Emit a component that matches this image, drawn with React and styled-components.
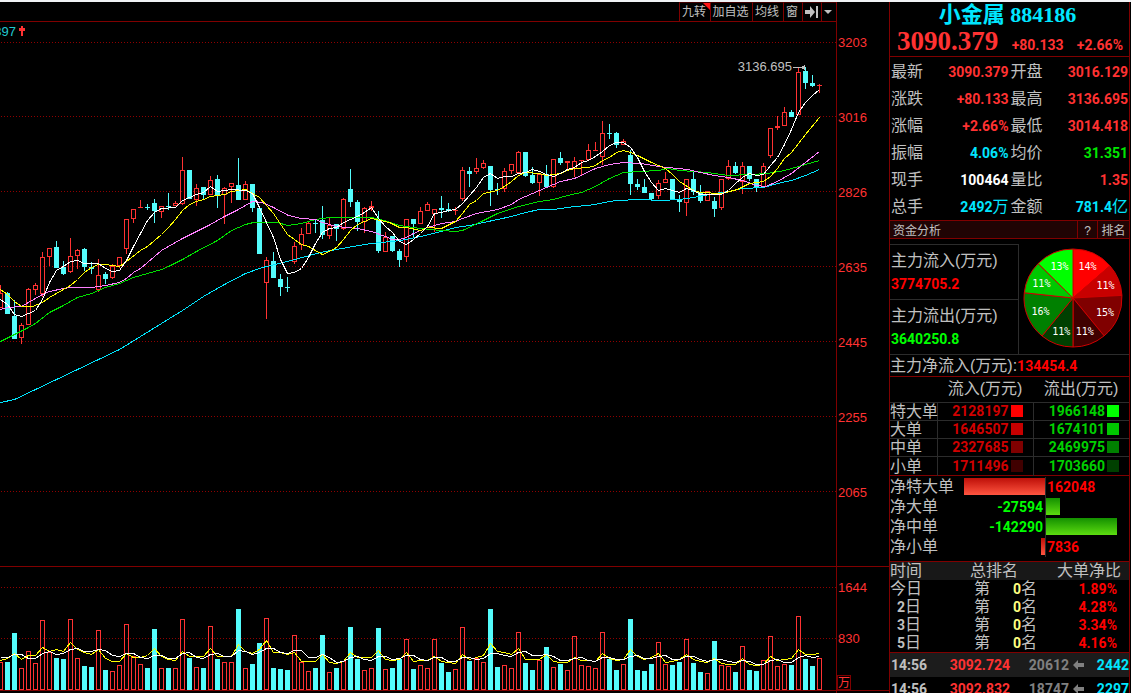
import React from 'react'
import styled, { createGlobalStyle } from 'styled-components'

const LINE = '#800000'
const RED = '#ff3232'
const CYAN = '#54fcfc'
const GREY = '#c0c0c0'
const AQUA = '#00e6ff'

const GlobalStyle = createGlobalStyle`
  * {
    box-sizing: border-box;
  }
  body {
    margin: 0;
    background: #000;
    color: ${GREY};
    font-family: 'Liberation Sans', 'Noto Sans CJK SC', sans-serif;
    font-size: 16px;
    font-weight: 400;
  }
  button {
    margin: 0;
    padding: 0;
    border: 0;
    background: none;
    color: inherit;
    font: inherit;
  }
  table {
    border-collapse: collapse;
    border-spacing: 0;
  }
  th,
  td {
    padding: 0;
    font-weight: 400;
    white-space: nowrap;
  }
`

const Page = styled.div`
  display: flex;
  flex-direction: column;
  height: 100vh;
  overflow: hidden;
  border-top: 2px solid #f0f2f5;
`
const Body = styled.div`
  display: flex;
  flex: 1;
  min-height: 0;
`
const Plots = styled.main`
  flex: 1;
  min-width: 0;
  border-right: 1px solid ${LINE};
`
const Toolbar = styled.div`
  display: flex;
  justify-content: flex-end;
  height: 20px;
  border-bottom: 1px solid ${LINE};
`
const ToolButton = styled.button`
  position: relative;
  display: flex;
  align-items: center;
  justify-content: center;
  width: ${(p) => p.$width}px;
  padding-right: 2px;
  border-top: 1px solid #400000;
  border-left: 1px solid ${LINE};
  font-size: 12px;
  line-height: 18px;
`
const Corner = styled.span`
  position: absolute;
  top: 0;
  right: 0;
  border-top: 7px solid #ff1414;
  border-left: 7px solid transparent;
`
const Plot = styled.div`
  display: flex;
  justify-content: flex-end;
  overflow: hidden;
  height: ${(p) => p.$height}px;
  border-bottom: 1px solid ${LINE};
  svg {
    flex: none;
    display: block;
  }
`
const Axis = styled.div`
  width: 52px;
`
const AxisPart = styled.div`
  display: flex;
  flex-direction: column;
  height: ${(p) => p.$height}px;
  padding-top: ${(p) => p.$top}px;
  border-bottom: 1px solid ${LINE};
`
const AxisLabel = styled.span`
  height: ${(p) => p.$step}px;
  padding-left: 1px;
  color: ${RED};
  font-size: 13px;
  line-height: 16px;
`
const AxisUnit = styled.span`
  width: 14px;
  height: 15px;
  margin-top: auto;
  border: 1px solid ${LINE};
  color: ${RED};
  font-size: 12px;
  line-height: 14px;
`

const Panel = styled.aside`
  display: flex;
  flex-direction: column;
  width: 241px;
  margin-right: 1px;
  overflow: hidden;
  border-left: 1px solid ${LINE};
  border-right: 1px solid ${LINE};
`
const Num = styled.span`
  color: ${(p) => p.$color};
  font-family: Roboto, 'Noto Sans CJK SC', sans-serif;
  font-size: 14px;
  font-weight: 700;
`
const Unit = styled.span`
  font-size: 16px;
  font-weight: 400;
`
const Head = styled.header`
  height: 55px;
  border-bottom: 1px solid ${LINE};
  text-align: center;
`
const Title = styled.h1`
  margin: 0;
  padding-right: 4px;
  color: ${AQUA};
  font-family: 'Liberation Serif', 'Noto Sans CJK SC', serif;
  font-size: 22px;
  font-weight: 700;
  line-height: 25px;
`
const PriceLine = styled.div`
  display: flex;
  align-items: baseline;
  justify-content: space-between;
  padding: 0 6px 0 7px;
  line-height: 28px;
`
const LastPrice = styled.strong`
  color: ${RED};
  font-family: 'Liberation Serif', serif;
  font-size: 27px;
  font-weight: 700;
`
const Quotes = styled.dl`
  display: grid;
  grid-template-columns: 1fr 1fr;
  margin: 0;
  padding-bottom: 1px;
`
const Quote = styled.div`
  display: flex;
  justify-content: space-between;
  height: 27px;
  padding: 0 1px;
  line-height: 30px;
  dd {
    margin: 0;
    white-space: nowrap;
  }
`
const SectionBar = styled.div`
  display: flex;
  height: 19px;
  border-top: 1px solid ${LINE};
  border-bottom: 1px solid ${LINE};
  background: #200404;
  font-size: 12px;
  line-height: 20px;
`
const SectionName = styled.h2`
  flex: 1;
  margin: 0;
  padding-left: 3px;
  font-size: 12px;
  font-weight: 400;
`
const BarButton = styled.button`
  width: ${(p) => p.$width}px;
  border-left: 1px solid ${LINE};
`
const Fund = styled.section`
  display: flex;
  padding-top: 5px;
`
const FundBoxes = styled.div`
  width: 129px;
  border-right: 1px solid #2c2c2c;
`
const FundBox = styled.div`
  height: 55px;
  padding: 4px 0 0 1px;
  border-top: 1px solid #2c2c2c;
  line-height: 24px;
  white-space: nowrap;
`
const FundValue = styled(Num)`
  display: block;
  line-height: 22px;
`
const PieBox = styled.div`
  display: flex;
  flex: 1;
  align-items: center;
  justify-content: center;
  padding: 0 2px 2px 0;
`
const NetTotal = styled.div`
  height: 23px;
  border-top: 1px solid #2c2c2c;
  border-bottom: 1px solid ${LINE};
  line-height: 22px;
  white-space: nowrap;
`
const FlowTable = styled.table`
  width: 100%;
  table-layout: fixed;
  border-bottom: 1px solid ${LINE};
  thead th {
    height: 25px;
    line-height: 24px;
  }
  tbody th,
  tbody td {
    height: 18px;
    border-top: 1px solid #2c2c2c;
    line-height: 17px;
    text-align: left;
  }
  tbody td {
    border-left: 1px solid #2c2c2c;
  }
  tbody tr:last-child > * {
    height: 19px;
    padding-top: 1px;
  }
`
const FlowCell = styled.span`
  display: flex;
  align-items: center;
  justify-content: flex-end;
  gap: 2px;
  padding-right: 10px;
`
const Swatch = styled.i`
  width: 12px;
  height: 12px;
  background: ${(p) => p.$color};
`
const NetList = styled.section`
  padding: 1px 0 4px;
  border-bottom: 1px solid ${LINE};
`
const NetRow = styled.div`
  display: grid;
  grid-template-columns: 155px 1fr;
  height: 20px;
  line-height: 20px;
`
const NetLeft = styled.div`
  display: flex;
  align-items: center;
  justify-content: space-between;
`
const NetRight = styled.div`
  display: flex;
  align-items: center;
  gap: 2px;
  border-left: 1px solid #2c2c2c;
`
const NetNum = styled(Num)`
  padding: 0 2px 0 1px;
`
const NetBar = styled.span`
  height: 17px;
  background: ${(p) =>
    p.$up
      ? 'linear-gradient(#be0f08, #ff5540)'
      : 'linear-gradient(#149000, #5cdc10)'};
`
const RankTable = styled.table`
  width: 100%;
  table-layout: fixed;
  border-bottom: 1px solid ${LINE};
  thead {
    background: #181818;
  }
  th,
  td {
    height: 18px;
    line-height: 18px;
    text-align: left;
  }
  th:last-child {
    padding-left: 17px;
  }
  td:last-child {
    padding-right: 12px;
    text-align: right;
  }
`
const Day = styled.span`
  display: block;
  width: 31px;
  text-align: right;
`
const Place = styled.span`
  display: flex;
  justify-content: space-between;
  width: 63px;
  margin-left: 4px;
`
const TickTable = styled.table`
  width: 100%;
  table-layout: fixed;
  td {
    height: 24px;
    line-height: 24px;
    text-align: right;
  }
  td:first-child {
    padding-left: 1px;
    text-align: left;
  }
  tr:first-child {
    background: #1c1c1c;
  }
`
const TickVolume = styled.span`
  display: flex;
  align-items: center;
  justify-content: flex-end;
  gap: 4px;
`

// [up, body top, body bottom, high, low, volume top]
const candles = [
  [1, 293, 308, 285, 308, 662], [0, 293, 314, 292, 314, 662],
  [0, 316, 339, 300, 339, 633], [1, 325, 338, 323, 344, 668],
  [1, 289, 325, 288, 325, 651], [1, 285, 290, 283, 295, 663],
  [1, 257, 294, 252, 297, 620], [1, 248, 257, 248, 266, 652],
  [0, 247, 268, 241, 268, 658], [0, 267, 274, 261, 275, 659],
  [1, 256, 272, 238, 273, 619], [1, 250, 256, 249, 269, 658],
  [0, 249, 267, 248, 271, 666], [0, 267, 269, 262, 274, 667],
  [1, 275, 290, 259, 292, 630], [0, 274, 279, 272, 284, 670],
  [1, 266, 278, 264, 279, 671], [1, 257, 266, 257, 268, 665],
  [1, 219, 249, 219, 254, 624], [1, 209, 219, 209, 223, 656],
  [1, 207, 208, 200, 208, 664], [0, 207, 208, 204, 210, 668],
  [0, 203, 211, 199, 223, 629], [1, 206, 212, 206, 218, 668],
  [0, 206, 207, 193, 210, 668], [1, 203, 206, 201, 206, 668],
  [1, 170, 204, 157, 205, 619], [0, 170, 199, 170, 199, 658],
  [1, 188, 200, 184, 206, 667], [0, 187, 195, 187, 199, 668],
  [1, 180, 195, 176, 195, 626], [0, 179, 196, 175, 208, 659],
  [1, 188, 195, 187, 224, 662], [1, 183, 187, 183, 203, 662],
  [0, 185, 200, 158, 200, 609], [1, 184, 200, 181, 200, 668],
  [0, 184, 208, 184, 212, 664], [0, 208, 254, 208, 254, 643],
  [1, 260, 283, 257, 319, 618], [0, 261, 278, 252, 278, 668],
  [0, 279, 287, 274, 296, 669], [0, 287, 288, 277, 292, 670],
  [1, 246, 262, 242, 264, 635], [1, 234, 245, 228, 250, 662],
  [1, 223, 234, 222, 234, 671], [0, 223, 224, 220, 233, 668],
  [0, 220, 235, 206, 239, 635], [1, 225, 236, 218, 239, 672],
  [0, 224, 229, 224, 241, 668], [1, 199, 229, 198, 230, 661],
  [0, 189, 202, 169, 207, 627], [0, 202, 222, 200, 231, 659],
  [1, 208, 222, 207, 233, 670], [1, 206, 208, 201, 211, 668],
  [0, 219, 251, 211, 253, 628], [1, 237, 252, 232, 252, 669],
  [0, 236, 251, 236, 252, 668], [0, 251, 260, 249, 267, 659],
  [1, 219, 257, 219, 262, 639], [0, 219, 224, 219, 237, 669],
  [1, 211, 224, 207, 224, 665], [1, 204, 211, 202, 211, 668],
  [1, 209, 214, 209, 232, 639], [0, 208, 210, 196, 218, 663],
  [0, 209, 211, 203, 212, 672], [1, 210, 211, 207, 215, 669],
  [1, 170, 199, 167, 201, 627], [0, 171, 174, 167, 187, 661],
  [1, 168, 172, 158, 174, 658], [1, 163, 168, 160, 169, 662],
  [0, 166, 190, 166, 206, 609], [0, 189, 190, 183, 195, 667],
  [1, 171, 189, 168, 192, 665], [1, 164, 171, 164, 174, 668],
  [1, 152, 173, 151, 173, 632], [0, 152, 176, 152, 177, 663],
  [0, 175, 183, 167, 184, 670], [1, 174, 183, 174, 196, 660],
  [0, 174, 187, 165, 187, 647], [1, 159, 187, 159, 188, 667],
  [0, 158, 163, 152, 165, 664], [1, 161, 163, 161, 169, 670],
  [1, 161, 169, 157, 177, 636], [1, 160, 161, 160, 176, 665],
  [1, 150, 160, 144, 161, 666], [1, 150, 151, 142, 151, 668],
  [1, 133, 157, 121, 165, 632], [0, 133, 134, 124, 139, 659],
  [0, 133, 145, 132, 148, 670], [1, 141, 145, 139, 145, 664],
  [0, 155, 184, 150, 195, 619], [0, 184, 187, 179, 190, 670],
  [0, 187, 193, 179, 193, 671], [0, 193, 199, 193, 200, 664],
  [1, 183, 196, 180, 199, 642], [1, 179, 183, 172, 183, 664],
  [0, 179, 199, 179, 199, 665], [0, 199, 202, 195, 212, 662],
  [1, 179, 203, 179, 216, 639], [0, 179, 192, 172, 195, 663],
  [0, 192, 201, 185, 203, 672], [1, 191, 201, 191, 201, 673],
  [0, 201, 209, 197, 217, 641], [1, 179, 208, 179, 210, 665],
  [1, 166, 179, 160, 180, 666], [0, 166, 173, 162, 174, 672],
  [1, 166, 182, 162, 194, 646], [0, 166, 179, 166, 181, 670],
  [0, 179, 187, 179, 192, 671], [1, 166, 187, 163, 187, 660],
  [1, 128, 156, 128, 158, 636], [1, 126, 128, 116, 130, 666],
  [1, 112, 126, 107, 126, 664], [0, 112, 117, 110, 117, 665],
  [1, 72, 115, 68, 115, 616], [0, 71, 83, 67, 89, 659],
  [0, 83, 86, 75, 87, 666], [1, 85, 86, 84, 93, 658],
]

const averages = [
  {
    color: '#00e6ff',
    points:
      '0,402 14,399 35,389 56,379 77,369 98,359 119,349 140,336 161,323 182,310 203,296 224,284 245,273 262,267 287,261 320,252 347,247 371,243 400,240 420,236 437,232 455,227 469,225 483,222 511,216 525,212 539,209 553,209 574,206 588,205 615,200 640,199 660,200 679,199 693,197 714,193 728,191 742,188 763,187 777,183 791,180 805,175 819,169',
  },
  {
    color: '#00e000',
    points:
      '0,341 14,334 28,327 35,323 49,312 63,305 77,297 91,293 105,287 119,283 133,277 147,273 161,269 168,266 182,259 196,251 217,240 231,230 245,224 253,222 277,222 287,225 301,223 315,219 329,217 371,217 387,221 399,225 420,228 441,230 455,231 462,230 483,220 497,213 518,206 539,201 553,199 567,195 581,192 595,186 609,178 623,172 640,171 658,170 667,168 680,170 707,172 728,175 750,174 767,173 784,170 798,166 805,164 819,160',
  },
  {
    color: '#ff80ff',
    points:
      '0,309 7,307 21,306 28,302 42,294 49,291 63,288 70,287 91,287 105,285 119,282 126,278 133,272 140,268 161,250 182,238 196,231 210,224 224,216 238,209 252,201 262,202 273,207 288,215 301,218 315,219 322,222 336,226 357,228 371,231 385,236 392,239 399,239 406,237 413,233 427,227 441,223 455,221 462,218 476,213 497,209 511,204 518,199 539,190 560,181 574,178 595,168 609,164 623,162 640,163 658,166 687,169 700,172 714,175 728,177 742,180 756,185 765,186 777,181 791,173 805,162 819,151',
  },
  {
    color: '#ffff00',
    points:
      '0,289 7,294 14,301 21,306 32,306 42,302 49,297 56,293 70,285 77,279 84,272 91,267 98,264 105,264 119,266 126,261 140,250 147,246 161,234 168,227 175,219 182,210 189,204 196,201 203,199 210,196 224,194 231,191 245,189 252,193 259,197 266,205 273,213 287,234 301,244 308,246 322,254 329,251 336,247 343,239 350,230 357,224 371,218 389,222 399,227 406,227 420,230 427,227 441,228 455,221 462,213 469,204 476,200 483,193 497,190 504,186 511,181 518,175 525,172 539,173 546,175 560,173 567,170 574,168 588,167 595,165 602,160 609,157 616,152 623,150 630,152 637,155 651,162 665,168 672,174 679,181 693,190 700,192 721,193 737,189 749,183 763,181 770,176 777,168 784,158 791,152 798,143 805,134 819,117',
  },
  {
    color: '#ffffff',
    points:
      '0,299 7,304 14,314 21,316 28,313 35,310 42,299 49,282 56,270 63,266 70,261 77,260 84,263 98,263 105,268 112,271 119,270 126,260 133,246 140,233 147,220 154,212 161,208 175,207 182,200 189,197 196,194 203,192 210,186 217,191 231,189 245,190 252,193 259,207 266,222 273,237 280,259 287,273 294,272 301,268 308,257 315,243 322,232 329,228 336,227 343,222 350,219 357,216 364,212 371,207 378,218 385,226 392,232 399,241 406,244 413,239 420,233 427,226 434,213 441,212 448,210 455,209 462,203 469,195 476,187 483,177 490,173 497,178 504,176 511,176 518,173 525,172 532,169 539,171 546,174 553,176 560,173 567,169 574,167 581,162 588,160 595,156 602,151 609,145 616,142 623,142 630,147 637,157 644,171 651,182 658,190 665,188 672,190 679,192 686,188 693,190 700,194 721,194 728,190 735,183 742,177 749,173 756,175 763,174 770,165 777,157 784,144 791,129 798,112 805,102 812,95 819,89',
  },
]

// offsets from y = 640, one per candle
const volumeAverages = [
  {
    color: '#ffff00',
    values: [
      20, 18, 13, 19, 15, 15, 7, 11, 9, 11, 2, 9, 12, 14, 9, 18, 21, 21, 13, 17,
      17, 15, 8, 16, 19, 20, 11, 16, 16, 16, 8, 16, 16, 16, 4, 11, 13, 9, 0, 12,
      12, 14, 12, 21, 21, 21, 14, 22, 23, 21, 12, 17, 17, 17, 10, 19, 20, 19, 12,
      21, 20, 20, 16, 21, 22, 23, 14, 19, 17, 15, 3, 11, 12, 14, 8, 19, 19, 19,
      14, 21, 22, 22, 17, 20, 20, 21, 13, 18, 20, 19, 9, 16, 19, 17, 13, 22, 21,
      19, 14, 19, 21, 22, 18, 23, 24, 24, 18, 24, 25, 24, 16, 20, 19, 18, 9, 14,
      14, 13,
    ],
  },
  {
    color: '#ffffff',
    values: [
      17, 17, 14, 14, 18, 18, 13, 11, 14, 13, 9, 8, 11, 11, 9, 10, 15, 16, 13, 13,
      17, 18, 15, 15, 18, 18, 13, 12, 17, 18, 14, 13, 16, 16, 10, 11, 14, 12, 8,
      8, 12, 13, 10, 10, 17, 17, 14, 17, 22, 21, 17, 16, 19, 20, 16, 16, 19, 18,
      15, 15, 19, 20, 17, 17, 21, 21, 17, 17, 19, 18, 13, 13, 15, 16, 12, 11, 15,
      15, 14, 16, 20, 20, 18, 17, 20, 21, 17, 17, 19, 19, 16, 15, 18, 18, 16, 15,
      19, 19, 16, 16, 19, 21, 19, 19, 21, 22, 20, 21, 24, 24, 20, 19, 22, 22, 17,
      15, 17, 16,
    ],
  },
]

const prices = [3203, 3016, 2826, 2635, 2445, 2255, 2065]
const priceLines = [42, 116, 191, 266, 341, 416, 491]

const quotes = [
  ['最新', '3090.379', RED],
  ['开盘', '3016.129', RED],
  ['涨跌', '+80.133', RED],
  ['最高', '3136.695', RED],
  ['涨幅', '+2.66%', RED],
  ['最低', '3014.418', RED],
  ['振幅', '4.06%', AQUA],
  ['均价', '31.351', '#00e600'],
  ['现手', '100464', '#ffffff'],
  ['量比', '1.35', RED],
  ['总手', '2492', AQUA, '万'],
  ['金额', '781.4', AQUA, '亿'],
]

const flows = [
  { name: '特大单', inflow: 2128197, outflow: 1966148, inColor: '#ff0000', outColor: '#00ff00' },
  { name: '大单', inflow: 1646507, outflow: 1674101, inColor: '#c80000', outColor: '#00c800' },
  { name: '中单', inflow: 2327685, outflow: 2469975, inColor: '#800000', outColor: '#008000' },
  { name: '小单', inflow: 1711496, outflow: 1703660, inColor: '#400000', outColor: '#004000' },
]

const nets = [
  ['净特大单', 162048],
  ['净大单', -27594],
  ['净中单', -142290],
  ['净小单', 7836],
]

const ranks = [
  ['今', '1.89%'],
  ['2', '4.28%'],
  ['3', '3.34%'],
  ['5', '4.16%'],
]

const ticks = [
  ['14:56', '3092.724', '20612', '2442'],
  ['14:56', '3092.832', '18747', '2297'],
]

const GridLine = ({ y }) => (
  <path d={`M1 ${y + 0.5}H836`} stroke="#900000" strokeDasharray="1 2" />
)

const Candle = ({ x, data: [up, top, bottom, high, low] }) => {
  const color = up ? RED : CYAN
  const hollow = up && bottom - top > 2
  return (
    <g>
      {high < top && (
        <rect x={x} y={high} width="1" height={top - high} fill={color} />
      )}
      {low > bottom && (
        <rect x={x} y={bottom} width="1" height={low - bottom} fill={color} />
      )}
      {hollow ? (
        <rect
          x={x - 1.5}
          y={top + 0.5}
          width="4"
          height={bottom - top - 1}
          fill="none"
          stroke={color}
        />
      ) : (
        <rect x={x - 2} y={top} width="5" height={bottom - top} fill={color} />
      )}
    </g>
  )
}

const PriceChart = () => (
  <svg width="836" height="544" viewBox="0 22 836 544">
    <g shapeRendering="crispEdges">
      {priceLines.map((y) => (
        <GridLine key={y} y={y} />
      ))}
      {candles.map((c, i) => (
        <Candle key={i} x={i * 7} data={c} />
      ))}
      <g fill="none" transform="translate(0.5 0.5)">
        {averages.map((a) => (
          <polyline key={a.color} points={a.points} stroke={a.color} />
        ))}
      </g>
      <path d="M793 67.5H805" stroke={GREY} />
      <path d="M802 66h2v-1h1v5h-1v-1h-2z" fill={GREY} />
      <path d="M21 26h2v2h2v3h-2v5h-2v-5h-2v-3h2z" fill={RED} />
    </g>
    <text x="16" y="36" fill="#20c8d0" fontSize="13" textAnchor="end">
      397
    </text>
    <text x="792" y="71" fill={GREY} fontSize="13" textAnchor="end">
      3136.695
    </text>
  </svg>
)

const VolumeChart = () => (
  <svg width="836" height="123" viewBox="0 567 836 123">
    <g shapeRendering="crispEdges">
      <GridLine y={587} />
      <GridLine y={638} />
      {candles.map(([up, , , , , top], i) => (
        <Candle key={i} x={i * 7} data={[up, top, 690, top, 690]} />
      ))}
      <g fill="none" transform="translate(0.5 0.5)">
        {volumeAverages.map((a) => (
          <polyline
            key={a.color}
            points={a.values.map((v, i) => `${i * 7},${640 + v}`).join(' ')}
            stroke={a.color}
          />
        ))}
      </g>
    </g>
  </svg>
)

const Pie = () => {
  const slices = [
    ...flows.map((f) => [f.inflow, f.inColor]),
    ...flows.map((f) => [f.outflow, f.outColor]).reverse(),
  ]
  const total = slices.reduce((sum, [value]) => sum + value, 0)
  const at = (share, r) => {
    const angle = share * 2 * Math.PI
    return [50 + r * Math.sin(angle), 50 - r * Math.cos(angle)]
  }
  let sum = 0
  const parts = slices.map(([value, color]) => {
    const start = sum / total
    sum += value
    const end = sum / total
    return {
      color,
      d: `M50 50L${at(start, 49)}A49 49 0 0 1 ${at(end, 49)}Z`,
      label: at((start + end) / 2, 35),
      text: `${Math.round((value / total) * 100)}%`,
    }
  })
  return (
    <svg width="100" height="100" viewBox="0 0 100 100">
      {parts.map((p) => (
        <path key={p.color} d={p.d} fill={p.color} stroke="#d00000" />
      ))}
      {parts.map((p) => (
        <text
          key={p.color}
          x={p.label[0]}
          y={p.label[1] + 4}
          fill="#fff"
          fontFamily="DejaVu Sans Mono, monospace"
          fontSize="10"
          fontWeight="400"
          textAnchor="middle"
        >
          {p.text}
        </text>
      ))}
    </svg>
  )
}

const FlowValue = ({ value, color, swatch }) => (
  <FlowCell>
    <Num $color={color}>{value}</Num>
    <Swatch $color={swatch} />
  </FlowCell>
)

const Net = ({ name, value }) => {
  const up = value > 0
  const bar = (
    <NetBar $up={up} style={{ width: Math.round(Math.abs(value) / 2000) }} />
  )
  const num = <NetNum $color={up ? '#ff0000' : '#00ff00'}>{value}</NetNum>
  return (
    <NetRow>
      <NetLeft>
        <span>{name}</span>
        {up ? bar : num}
      </NetLeft>
      <NetRight>{up ? num : bar}</NetRight>
    </NetRow>
  )
}

const App = () => (
  <Page>
    <GlobalStyle />
    <Body>
      <Plots>
        <Toolbar>
          <ToolButton $width={31}>
            九转
            <Corner />
          </ToolButton>
          <ToolButton $width={42}>加自选</ToolButton>
          <ToolButton $width={31}>均线</ToolButton>
          <ToolButton $width={19}>窗</ToolButton>
          <ToolButton $width={19} aria-label="右移">
            <svg width="13" height="12" viewBox="0 0 13 12" fill={GREY}>
              <path d="M0 4h5V0l5 6-5 6V8H0zM11 0h2v12h-2z" />
            </svg>
          </ToolButton>
          <ToolButton $width={15} aria-label="更多">
            <svg width="8" height="4" viewBox="0 0 8 4" fill={GREY}>
              <path d="M0 0h8L4 4z" />
            </svg>
          </ToolButton>
        </Toolbar>
        <Plot $height={545}>
          <PriceChart />
        </Plot>
        <Plot $height={124}>
          <VolumeChart />
        </Plot>
      </Plots>
      <Axis>
        <AxisPart $height={565} $top={33}>
          {prices.map((price) => (
            <AxisLabel key={price} $step={75}>
              {price}
            </AxisLabel>
          ))}
        </AxisPart>
        <AxisPart $height={124} $top={13}>
          <AxisLabel $step={51}>1644</AxisLabel>
          <AxisLabel $step={16}>830</AxisLabel>
          <AxisUnit>万</AxisUnit>
        </AxisPart>
      </Axis>
      <Panel>
        <Head>
          <Title>小金属 884186</Title>
          <PriceLine>
            <LastPrice>3090.379</LastPrice>
            <Num $color={RED}>+80.133</Num>
            <Num $color={RED}>+2.66%</Num>
          </PriceLine>
        </Head>
        <Quotes>
          {quotes.map(([name, value, color, unit]) => (
            <Quote key={name}>
              <dt>{name}</dt>
              <dd>
                <Num $color={color}>
                  {value}
                  {unit && <Unit>{unit}</Unit>}
                </Num>
              </dd>
            </Quote>
          ))}
        </Quotes>
        <SectionBar>
          <SectionName>资金分析</SectionName>
          <BarButton $width={20}>?</BarButton>
          <BarButton $width={32}>排名</BarButton>
        </SectionBar>
        <Fund>
          <FundBoxes>
            <FundBox>
              主力流入(万元)
              <FundValue $color="#ff0000">3774705.2</FundValue>
            </FundBox>
            <FundBox>
              主力流出(万元)
              <FundValue $color="#00ff00">3640250.8</FundValue>
            </FundBox>
          </FundBoxes>
          <PieBox>
            <Pie />
          </PieBox>
        </Fund>
        <NetTotal>
          主力净流入(万元):<Num $color="#ff0000">134454.4</Num>
        </NetTotal>
        <FlowTable>
          <colgroup>
            <col width="47" />
            <col width="96" />
            <col />
          </colgroup>
          <thead>
            <tr>
              <th />
              <th>流入(万元)</th>
              <th>流出(万元)</th>
            </tr>
          </thead>
          <tbody>
            {flows.map((f) => (
              <tr key={f.name}>
                <th>{f.name}</th>
                <td>
                  <FlowValue value={f.inflow} color="#d00000" swatch={f.inColor} />
                </td>
                <td>
                  <FlowValue value={f.outflow} color="#00d000" swatch={f.outColor} />
                </td>
              </tr>
            ))}
          </tbody>
        </FlowTable>
        <NetList>
          {nets.map(([name, value]) => (
            <Net key={name} name={name} value={value} />
          ))}
        </NetList>
        <RankTable>
          <colgroup>
            <col width="80" />
            <col width="70" />
            <col />
          </colgroup>
          <thead>
            <tr>
              <th>时间</th>
              <th>总排名</th>
              <th>大单净比</th>
            </tr>
          </thead>
          <tbody>
            {ranks.map(([day, ratio]) => (
              <tr key={day}>
                <td>
                  <Day>
                    {day === '今' ? day : <Num $color={GREY}>{day}</Num>}日
                  </Day>
                </td>
                <td>
                  <Place>
                    <span>第</span>
                    <span>
                      <Num $color="#ffff80">0</Num>名
                    </span>
                  </Place>
                </td>
                <td>
                  <Num $color="#ff0000">{ratio}</Num>
                </td>
              </tr>
            ))}
          </tbody>
        </RankTable>
        <TickTable>
          <colgroup>
            <col width="50" />
            <col width="70" />
            <col width="74" />
            <col />
          </colgroup>
          <tbody>
            {ticks.map(([time, price, volume, count]) => (
              <tr key={price}>
                <td>
                  <Num $color={GREY}>{time}</Num>
                </td>
                <td>
                  <Num $color={RED}>{price}</Num>
                </td>
                <td>
                  <TickVolume>
                    <Num $color="#808080">{volume}</Num>
                    <svg width="11" height="10" viewBox="0 0 11 10" fill="#808080">
                      <path d="M0 5l5-5v3h6v4H5v3z" />
                    </svg>
                  </TickVolume>
                </td>
                <td>
                  <Num $color={AQUA}>{count}</Num>
                </td>
              </tr>
            ))}
          </tbody>
        </TickTable>
      </Panel>
    </Body>
  </Page>
)

export default App
